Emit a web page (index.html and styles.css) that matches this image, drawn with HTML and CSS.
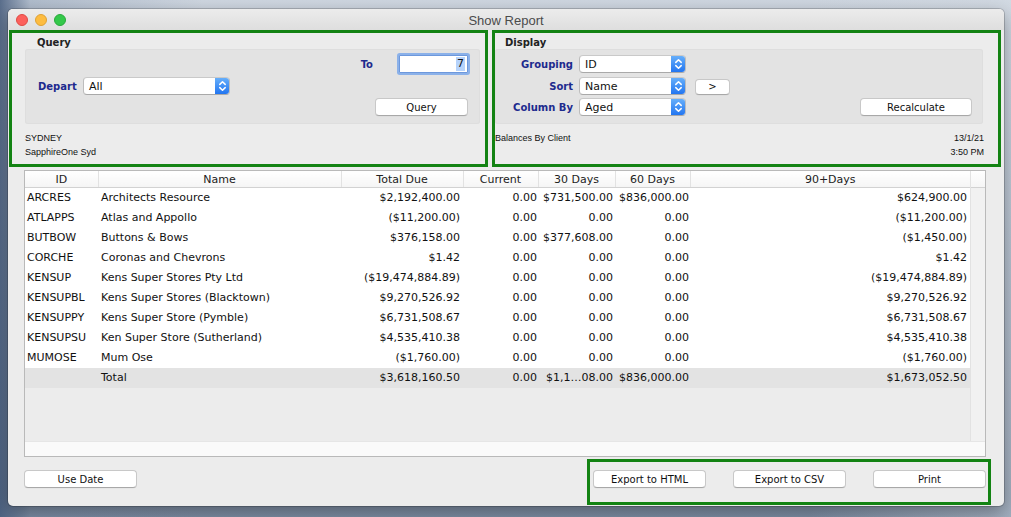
FILE: index.html
```html
<!DOCTYPE html>
<html lang="en">
<head>
<meta charset="utf-8">
<title>Show Report</title>
<link rel="stylesheet" href="styles.css">
</head>
<body>
<div class="window">
  <div class="titlebar">
    <div class="lights">
      <span class="light light-red"></span>
      <span class="light light-yellow"></span>
      <span class="light light-green"></span>
    </div>
    <div class="title">Show Report</div>
    <div></div>
  </div>

  <div class="panels">
    <section class="panel panel-query">
      <div class="panel-title">Query</div>
      <div class="group">
        <div class="row row-first row-end">
          <span class="label label-to">To</span>
          <div class="field"><span class="sel">7</span></div>
        </div>
        <div class="row row-second">
          <span class="label label-depart">Depart</span>
          <div class="popup popup-wide">
            <span class="popup-text">All</span>
            <span class="stepper"><svg width="15" height="18" viewBox="0 0 15 18"><path d="M4.8 7.4 L7.5 4.8 L10.2 7.4 M4.8 10.6 L7.5 13.2 L10.2 10.6" fill="none" stroke="#fff" stroke-width="1.5" stroke-linecap="round" stroke-linejoin="round"/></svg></span>
          </div>
        </div>
        <div class="row row-third row-end">
          <button class="btn btn-query">Query</button>
        </div>
      </div>
      <div class="footnote">
        <div class="foot-line">SYDNEY</div>
        <div class="foot-line">SapphireOne Syd</div>
      </div>
    </section>

    <section class="panel panel-display">
      <div class="panel-title">Display</div>
      <div class="group group-display">
        <div class="row row-first">
          <span class="label label-disp">Grouping</span>
          <div class="popup popup-narrow">
            <span class="popup-text">ID</span>
            <span class="stepper"><svg width="15" height="18" viewBox="0 0 15 18"><path d="M4.8 7.4 L7.5 4.8 L10.2 7.4 M4.8 10.6 L7.5 13.2 L10.2 10.6" fill="none" stroke="#fff" stroke-width="1.5" stroke-linecap="round" stroke-linejoin="round"/></svg></span>
          </div>
        </div>
        <div class="row row-second">
          <span class="label label-disp">Sort</span>
          <div class="popup popup-narrow">
            <span class="popup-text">Name</span>
            <span class="stepper"><svg width="15" height="18" viewBox="0 0 15 18"><path d="M4.8 7.4 L7.5 4.8 L10.2 7.4 M4.8 10.6 L7.5 13.2 L10.2 10.6" fill="none" stroke="#fff" stroke-width="1.5" stroke-linecap="round" stroke-linejoin="round"/></svg></span>
          </div>
          <button class="btn btn-arrow">&gt;</button>
        </div>
        <div class="row row-third">
          <span class="label label-disp">Column By</span>
          <div class="popup popup-narrow">
            <span class="popup-text">Aged</span>
            <span class="stepper"><svg width="15" height="18" viewBox="0 0 15 18"><path d="M4.8 7.4 L7.5 4.8 L10.2 7.4 M4.8 10.6 L7.5 13.2 L10.2 10.6" fill="none" stroke="#fff" stroke-width="1.5" stroke-linecap="round" stroke-linejoin="round"/></svg></span>
          </div>
          <span class="spacer"></span>
          <button class="btn btn-recalc">Recalculate</button>
        </div>
      </div>
      <div class="footnote footnote-display">
        <div class="foot-line foot-split"><span>Balances By Client</span><span>13/1/21</span></div>
        <div class="foot-line foot-right">3:50 PM</div>
      </div>
    </section>
  </div>

  <div class="grid">
    <div class="grid-body">
      <div class="grid-cols">
        <table class="report">
          <colgroup>
            <col class="c-id"><col class="c-name"><col class="c-total"><col class="c-cur"><col class="c-30"><col class="c-60"><col class="c-90">
          </colgroup>
          <thead>
            <tr><th>ID</th><th>Name</th><th>Total Due</th><th>Current</th><th>30 Days</th><th>60 Days</th><th>90+Days</th></tr>
          </thead>
          <tbody>
            <tr><td class="t-id">ARCRES</td><td class="t-name">Architects Resource</td><td class="num">$2,192,400.00</td><td class="num n-cur">0.00</td><td class="num n-30">$731,500.00</td><td class="num n-60">$836,000.00</td><td class="num">$624,900.00</td></tr>
            <tr><td class="t-id">ATLAPPS</td><td class="t-name">Atlas and Appollo</td><td class="num">($11,200.00)</td><td class="num n-cur">0.00</td><td class="num n-30">0.00</td><td class="num n-60">0.00</td><td class="num">($11,200.00)</td></tr>
            <tr><td class="t-id">BUTBOW</td><td class="t-name">Buttons &amp; Bows</td><td class="num">$376,158.00</td><td class="num n-cur">0.00</td><td class="num n-30">$377,608.00</td><td class="num n-60">0.00</td><td class="num">($1,450.00)</td></tr>
            <tr><td class="t-id">CORCHE</td><td class="t-name">Coronas and Chevrons</td><td class="num">$1.42</td><td class="num n-cur">0.00</td><td class="num n-30">0.00</td><td class="num n-60">0.00</td><td class="num">$1.42</td></tr>
            <tr><td class="t-id">KENSUP</td><td class="t-name">Kens Super Stores Pty Ltd</td><td class="num">($19,474,884.89)</td><td class="num n-cur">0.00</td><td class="num n-30">0.00</td><td class="num n-60">0.00</td><td class="num">($19,474,884.89)</td></tr>
            <tr><td class="t-id">KENSUPBL</td><td class="t-name">Kens Super Stores (Blacktown)</td><td class="num">$9,270,526.92</td><td class="num n-cur">0.00</td><td class="num n-30">0.00</td><td class="num n-60">0.00</td><td class="num">$9,270,526.92</td></tr>
            <tr><td class="t-id">KENSUPPY</td><td class="t-name">Kens Super Store (Pymble)</td><td class="num">$6,731,508.67</td><td class="num n-cur">0.00</td><td class="num n-30">0.00</td><td class="num n-60">0.00</td><td class="num">$6,731,508.67</td></tr>
            <tr><td class="t-id">KENSUPSU</td><td class="t-name">Ken Super Store (Sutherland)</td><td class="num">$4,535,410.38</td><td class="num n-cur">0.00</td><td class="num n-30">0.00</td><td class="num n-60">0.00</td><td class="num">$4,535,410.38</td></tr>
            <tr><td class="t-id">MUMOSE</td><td class="t-name">Mum Ose</td><td class="num">($1,760.00)</td><td class="num n-cur">0.00</td><td class="num n-30">0.00</td><td class="num n-60">0.00</td><td class="num">($1,760.00)</td></tr>
            <tr class="total-row"><td class="t-id"></td><td class="t-name">Total</td><td class="num">$3,618,160.50</td><td class="num n-cur">0.00</td><td class="num n-30">$1,1…08.00</td><td class="num n-60">$836,000.00</td><td class="num">$1,673,052.50</td></tr>
          </tbody>
        </table>
      </div>
      <div class="vtrack">
        <div class="vtrack-head"></div>
      </div>
    </div>
    <div class="htrack"></div>
  </div>

  <div class="bottom">
    <button class="btn btn-bottom btn-usedate">Use Date</button>
    <span class="spacer"></span>
    <div class="export-box">
      <button class="btn btn-bottom">Export to HTML</button>
      <button class="btn btn-bottom">Export to CSV</button>
      <button class="btn btn-bottom">Print</button>
    </div>
  </div>
</div>
</body>
</html>
```

FILE: styles.css
```css
html, body {
  margin: 0;
  height: 100%;
}
body {
  box-sizing: border-box;
  padding: 9px 7px 0 8px;
  overflow: hidden;
  background:
    linear-gradient(90deg, rgba(70, 92, 125, 0.85) 0%, rgba(120, 140, 168, 0.35) 3%, rgba(0, 0, 0, 0) 20%, rgba(0, 0, 0, 0) 80%, rgba(215, 222, 230, 0.4) 100%),
    linear-gradient(180deg, #cfd7e1 0%, #a6b4c6 45%, #7e8ea4 100%);
  font-family: "DejaVu Sans", Verdana, sans-serif;
}

.window {
  width: 996px;
  height: 497px;
  background: #ececec;
  border-radius: 5px;
  box-shadow: 0 0 0 1px rgba(0, 0, 0, 0.18), 0 6px 18px rgba(0, 0, 0, 0.35);
  overflow: hidden;
  display: flex;
  flex-direction: column;
}

/* Title bar */
.titlebar {
  height: 21px;
  flex: none;
  display: grid;
  grid-template-columns: 1fr auto 1fr;
  align-items: center;
  background: linear-gradient(#ececec, #dedede);
}
.lights {
  display: flex;
  gap: 7px;
  padding-left: 8px;
  padding-top: 1px;
}
.light {
  width: 12px;
  height: 12px;
  border-radius: 50%;
  box-sizing: border-box;
}
.light-red { background: #fc605c; border: 0.5px solid #de4a45; }
.light-yellow { background: #fdbc40; border: 0.5px solid #dea133; }
.light-green { background: #34c84a; border: 0.5px solid #28a93b; }
.title {
  font-family: "Liberation Sans", Arial, sans-serif;
  font-size: 13px;
  color: #4b4b4b;
  padding-top: 1px;
}

/* Panels */
.panels {
  display: flex;
  gap: 4px;
  padding: 0 3px 0 1px;
  height: 137px;
  flex: none;
}
.panel {
  box-sizing: border-box;
  border: 3px solid #138313;
  height: 137px;
  display: flex;
  flex-direction: column;
}
.panel-query { width: 479px; }
.panel-display { width: 509px; }

.panel-title {
  font-size: 10px;
  font-weight: bold;
  color: #222;
  height: 16px;
  line-height: 13px;
  padding-top: 3px;
  box-sizing: border-box;
}
.panel-query .panel-title { padding-left: 25px; }
.panel-display .panel-title { padding-left: 10px; }

.group {
  height: 75px;
  background: #e3e3e3;
  border-radius: 3px;
  box-shadow: inset 0 0 0 1px #dedede;
  margin: 0 5px 0 13px;
  display: flex;
  flex-direction: column;
}
.group-display {
  margin: 0 15px 0 0;
}

.row {
  height: 18px;
  display: flex;
  align-items: center;
}
.row-first { margin-top: 6px; }
.row-second { margin-top: 4px; }
.row-third { margin-top: 3px; }
.row-end {
  justify-content: flex-end;
  padding-right: 12px;
}

.label {
  font-size: 10px;
  font-weight: bold;
  color: #1d2a8e;
  white-space: nowrap;
}
.label-to { margin-right: 26px; }
.label-depart {
  width: 45px;
  margin-left: 13px;
}
.label-disp {
  width: 78px;
  text-align: right;
  margin-right: 6px;
}

/* text field */
.field {
  box-sizing: border-box;
  width: 69px;
  height: 18px;
  background: #fff;
  border: 1px solid #6d98dc;
  box-shadow: 0 0 0 2px rgba(110, 160, 235, 0.75);
  border-radius: 1px;
  display: flex;
  justify-content: flex-end;
  align-items: center;
  padding-right: 2px;
  font-size: 11px;
  color: #111;
}
.sel {
  background: #b6d3fb;
  padding: 0 1px;
  line-height: 14px;
}

/* popup buttons */
.popup {
  box-sizing: border-box;
  height: 18px;
  background: #fff;
  border: 1px solid #bdbdbd;
  border-top-color: #c9c9c9;
  border-bottom-color: #a9a9a9;
  border-radius: 4px;
  display: flex;
  align-items: center;
  overflow: hidden;
  font-size: 11px;
  color: #111;
}
.popup-wide { width: 147px; }
.popup-narrow { width: 107px; }
.popup-text {
  flex: 1;
  padding-left: 5px;
  white-space: nowrap;
}
.stepper {
  width: 15px;
  height: 18px;
  margin-right: -1px;
  background: linear-gradient(#6ab2fb, #1e72f0);
  display: flex;
  align-items: center;
  justify-content: center;
}
.stepper svg { display: block; }

/* buttons */
.btn {
  box-sizing: border-box;
  height: 18px;
  padding: 0;
  background: #fff;
  border: 1px solid #c8c8c8;
  border-bottom-color: #a8a8a8;
  border-radius: 4px;
  font-family: "DejaVu Sans", Verdana, sans-serif;
  font-size: 10px;
  color: #111;
  line-height: 17px;
  text-align: center;
  box-shadow: 0 0.5px 0 rgba(0, 0, 0, 0.05);
}
.btn-query { width: 93px; }
.btn-arrow {
  width: 35px;
  height: 16px;
  line-height: 14px;
  margin-left: 9px;
  margin-top: 2px;
}
.btn-recalc {
  width: 112px;
  margin-right: 11px;
}
.spacer { flex: 1; }

/* footnotes */
.footnote {
  font-family: "Liberation Sans", Arial, sans-serif;
  font-size: 9px;
  color: #111;
  margin-top: 7px;
  padding-left: 13px;
}
.footnote-display {
  padding-left: 0;
  padding-right: 14px;
}
.foot-line {
  height: 14px;
  line-height: 14px;
  white-space: nowrap;
}
.foot-split {
  display: flex;
  justify-content: space-between;
}
.foot-right { text-align: right; }

/* report grid */
.grid {
  box-sizing: border-box;
  width: 962px;
  height: 287px;
  margin: 3px 0 0 16px;
  border: 1px solid #b9b9b9;
  background: #ececec;
  display: flex;
  flex-direction: column;
  flex: none;
}
.grid-body {
  flex: 1;
  display: flex;
  min-height: 0;
}
.grid-cols { width: 945px; }
.vtrack {
  flex: 1;
  background: #f1f1f1;
  border-left: 1px solid #e2e2e2;
}
.vtrack-head {
  height: 16px;
  background: linear-gradient(#ffffff, #f5f5f5);
  border-bottom: 1px solid #d2d2d2;
}
.htrack {
  height: 15px;
  background: #fafafa;
  border-top: 1px solid #e6e6e6;
  box-sizing: border-box;
}

.report {
  border-collapse: collapse;
  table-layout: fixed;
  width: 945px;
  font-family: "DejaVu Sans", Verdana, sans-serif;
  font-size: 11px;
  color: #111;
}
.c-id { width: 73px; }
.c-name { width: 243px; }
.c-total { width: 122px; }
.c-cur { width: 75px; }
.c-30 { width: 77px; }
.c-60 { width: 75px; }
.c-90 { width: 280px; }

.report th {
  height: 14px;
  padding: 2px 0 0;
  font-weight: normal;
  text-align: center;
  color: #222;
  background: linear-gradient(#ffffff, #f5f5f5);
  border-bottom: 1px solid #d2d2d2;
  border-right: 1px solid #e2e2e2;
  line-height: 14px;
  white-space: nowrap;
  overflow: hidden;
}
.report th:last-child { border-right: none; }

.report td {
  height: 20px;
  padding: 0 3px 0 2px;
  background: #fff;
  white-space: nowrap;
  overflow: hidden;
  line-height: 20px;
}
.report td.t-id { padding-left: 2px; }
.report td.t-name { padding-left: 3px; }
.report td.num { text-align: right; }
.report td.n-cur { padding-right: 1px; }
.report td.n-30 { padding-right: 2px; }
.report td.n-60 { padding-right: 1px; padding-left: 0; }
.report tr.total-row td { background: #e3e3e3; }

/* bottom bar */
.bottom {
  display: flex;
  align-items: flex-start;
  margin-top: 2px;
  padding: 0 13px 0 16px;
  flex: none;
}
.btn-bottom { width: 113px; }
.btn-usedate { margin-top: 11px; }
.export-box {
  box-sizing: border-box;
  width: 404px;
  height: 46px;
  border: 3px solid #138313;
  padding: 8px 2px 0 3px;
  display: flex;
  justify-content: space-between;
  align-items: flex-start;
}
```
